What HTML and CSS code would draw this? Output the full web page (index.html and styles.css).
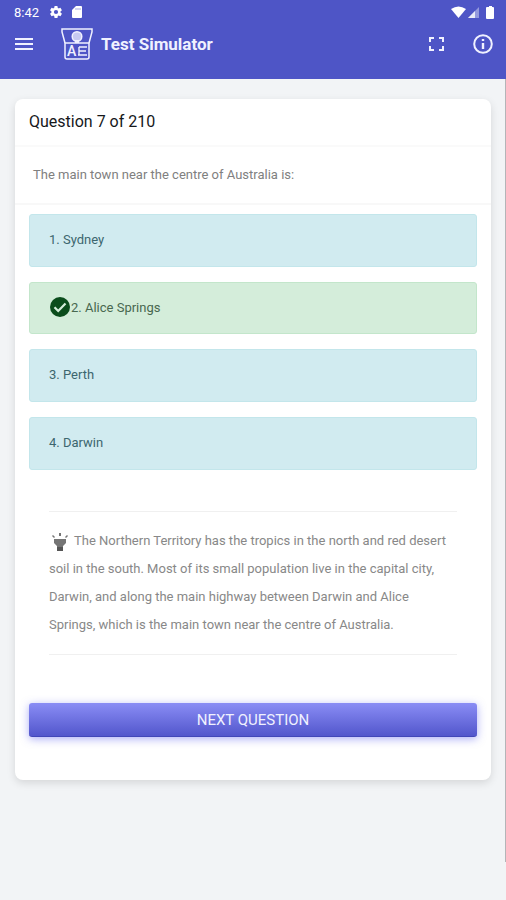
FILE: index.html
```
<!DOCTYPE html>
<html lang="en">
<head>
    <meta charset="UTF-8">
    <meta name="viewport" content="width=device-width, initial-scale=1.0">
    <title>Test Simulator</title>
    <link rel="stylesheet" href="styles.css">
</head>
<body>

    <header>
        <div class="status">
            <span class="clock">8:42</span>
            <svg width="12" height="12" viewBox="2 2 20 20" fill="currentColor"><path d="M19.4 13a7.5 7.5 0 0 0 0-2l2.1-1.65a.5.5 0 0 0 .12-.64l-2-3.46a.5.5 0 0 0-.61-.22l-2.49 1a7.3 7.3 0 0 0-1.69-.98l-.38-2.65A.49.49 0 0 0 14 2h-4a.49.49 0 0 0-.49.42l-.38 2.65c-.61.25-1.17.58-1.69.98l-2.49-1a.5.5 0 0 0-.61.22l-2 3.46a.5.5 0 0 0 .12.64L4.56 11a7.5 7.5 0 0 0 0 2l-2.1 1.65a.5.5 0 0 0-.12.64l2 3.46c.12.22.39.3.61.22l2.49-1c.52.4 1.08.73 1.69.98l.38 2.65c.04.24.25.42.49.42h4c.25 0 .46-.18.49-.42l.38-2.65c.61-.25 1.17-.58 1.69-.98l2.49 1c.23.09.49 0 .61-.22l2-3.46a.5.5 0 0 0-.12-.64zM12 15.5a3.5 3.5 0 1 1 0-7 3.5 3.5 0 0 1 0 7z"/></svg>
            <svg class="sd" width="10" height="12" viewBox="0 0 10 12" fill="currentColor"><path d="M4 0h5a1 1 0 0 1 1 1v10a1 1 0 0 1-1 1H1a1 1 0 0 1-1-1V4z"/><path d="M4 2v2M6 2v2M8 2v2" stroke="#4e55c6" stroke-width="0.5"/></svg>
            <svg class="signals" width="43" height="13" viewBox="0 0 43 13" fill="currentColor">
                <path d="M0 3Q7.5-2 15 3L7.5 12z"/>
                <path d="M28 1v11H17z" opacity="0.4"/>
                <path d="M24 5v7h-7z" opacity="0.8"/>
                <path d="M36 1h2V0h3v1h1a1 1 0 0 1 1 1v10a1 1 0 0 1-1 1h-6a1 1 0 0 1-1-1V2a1 1 0 0 1 1-1z"/>
            </svg>
        </div>
        <nav>
            <button class="icon-btn" aria-label="Menu">
                <svg width="18" height="14" viewBox="0 0 18 14" stroke="currentColor" stroke-width="2"><path d="M0 2h18M0 7h18M0 12h18"/></svg>
            </button>
            <a href="index.html" class="home">
                <svg class="logo" width="32" height="32" viewBox="0 0 32 32" fill="none" stroke="currentColor" stroke-width="1.5">
                    <path d="M4 15L1 4V1h30v3l-3 11"/>
                    <path d="M4 15h24v14a2 2 0 0 1-2 2H6a2 2 0 0 1-2-2z"/>
                    <circle cx="16" cy="8.5" r="4.8" fill="currentColor" fill-opacity="0.75"/>
                    <path d="M14 12v3h4v-3" fill="currentColor" stroke="none"/>
                    <path d="M18 19h8M18 23h7M17 27h9M18 19v8" stroke-width="1.4"/>
                    <text x="6" y="28">A</text>
                </svg>
                <span>Test Simulator</span>
            </a>
            <button class="icon-btn expand" aria-label="Full screen">
                <svg width="15" height="14" viewBox="0 0 15 14" fill="none" stroke="currentColor" stroke-width="2"><path d="M1 5V1h4M10 1h4v4M14 9v4h-4M5 13H1V9"/></svg>
            </button>
            <button class="icon-btn" aria-label="Info">
                <svg width="20" height="20" viewBox="0 0 20 20" fill="none" stroke="currentColor" stroke-width="2"><circle cx="10" cy="10" r="8.8"/><path d="M10 9v6M10 5v2" stroke-width="2.4"/></svg>
            </button>
        </nav>
    </header>

    <main>
        <div class="card">
            <h2>Question 7 of 210</h2>
            <p class="question">The main town near the centre of Australia is:</p>

            <div class="answers">
                <button class="answer">1. Sydney</button>
                <button class="answer correct">
                    <svg width="22" height="22" viewBox="1 1 22 22"><circle cx="12" cy="12" r="10" fill="#0b4d1c"/><path d="M6.5 12.3l3.7 3.7 7.3-7.5" fill="none" stroke="#d4edda" stroke-width="2.2"/></svg>2. Alice Springs
                </button>
                <button class="answer">3. Perth</button>
                <button class="answer">4. Darwin</button>
            </div>

            <p class="explanation">
                <svg width="22" height="20" viewBox="0 0 22 20" fill="#757575"><path d="M5 7h12v4l-3 3v5H8v-5l-3-3z"/><path d="M10 1h2v3h-2zM3 4l1-1 2 2-1 1zM19 4l-1-1-2 2 1 1z"/><path d="M8 15h6v4H8z" fill="#555"/></svg>
                The Northern Territory has the tropics in the north and red desert soil in the south. Most of its small population live in the capital city, Darwin, and along the main highway between Darwin and Alice Springs, which is the main town near the centre of Australia.
            </p>

            <button class="next">NEXT QUESTION</button>
        </div>
        <div class="scrollbar"></div>
    </main>

</body>
</html>
```

FILE: styles.css
```
* {
    box-sizing: border-box;
}

body {
    margin: 0;
    min-height: 100vh;
    background-color: #f2f4f6;
    font-family: Roboto, "Liberation Sans", sans-serif;
    font-size: 13px;
}

button {
    font-family: inherit;
    cursor: pointer;
}

header {
    background-color: #4e55c6;
    color: white;
    height: 79px;
}

.status {
    display: flex;
    align-items: center;
    height: 24px;
    padding: 0 12px 0 14px;
}

.clock {
    font-size: 13px;
    margin-right: 11px;
}

.sd {
    margin-left: 10px;
}

.signals {
    margin-left: auto;
}

nav {
    display: flex;
    align-items: center;
    height: 40px;
    padding: 0 13px 0 15px;
    color: #f0f1ff;
}

.icon-btn {
    display: flex;
    padding: 0;
    border: none;
    background: none;
    color: inherit;
}

.home {
    display: flex;
    align-items: center;
    gap: 8px;
    margin-left: 28px;
    margin-right: auto;
    color: inherit;
    font-size: 17px;
    font-weight: 700;
    text-decoration: none;
}

.logo text {
    fill: currentColor;
    stroke: none;
    font-size: 14px;
    font-weight: 500;
}

.expand {
    margin-right: 29px;
}

main {
    position: relative;
    padding: 20px 15px 82px;
}

.card {
    background-color: white;
    border-radius: 8px;
    box-shadow: 0 3px 8px rgba(0, 0, 0, 0.12);
    padding-bottom: 43px;
}

.card h2 {
    margin: 0;
    padding: 13px 14px;
    border-bottom: 2px solid #fafafa;
    color: #16181b;
    font-size: 16px;
    font-weight: 400;
    line-height: 20px;
}

.question {
    margin: 0;
    padding: 17px 18px;
    border-bottom: 2px solid #f8f8f8;
    color: #808080;
    line-height: 22px;
}

.answers {
    display: flex;
    flex-direction: column;
    gap: 15px;
    padding: 9px 14px 0;
}

.answer {
    display: flex;
    align-items: center;
    height: 53px;
    padding: 0 19px 2px;
    border: 1px solid #c3e6eb;
    border-radius: 3px;
    background-color: #d1ebf0;
    color: #3c666e;
    font-size: 13px;
    text-align: left;
}

.answer.correct {
    height: 52px;
    border-color: #c3e6cb;
    background-color: #d4edda;
    color: #48684f;
}

.explanation {
    margin: 41px 34px 48px;
    padding: 15px 0;
    border-top: 1px solid #f0f0f0;
    border-bottom: 1px solid #f0f0f0;
    color: #888888;
    line-height: 28px;
}

.explanation svg {
    vertical-align: middle;
}

.next {
    display: block;
    width: calc(100% - 28px);
    height: 34px;
    margin: 0 14px;
    border: none;
    border-bottom: 1px solid #4146b8;
    border-radius: 3px;
    background: linear-gradient(#8a8df5, #5256cc);
    box-shadow: 0 2px 8px rgba(90, 94, 240, 0.5);
    color: #f0f1ff;
    font-size: 15px;
}

.scrollbar {
    position: absolute;
    top: 0;
    right: 0;
    width: 1px;
    height: 100%;
    background-color: #b4b5b8;
}
```
